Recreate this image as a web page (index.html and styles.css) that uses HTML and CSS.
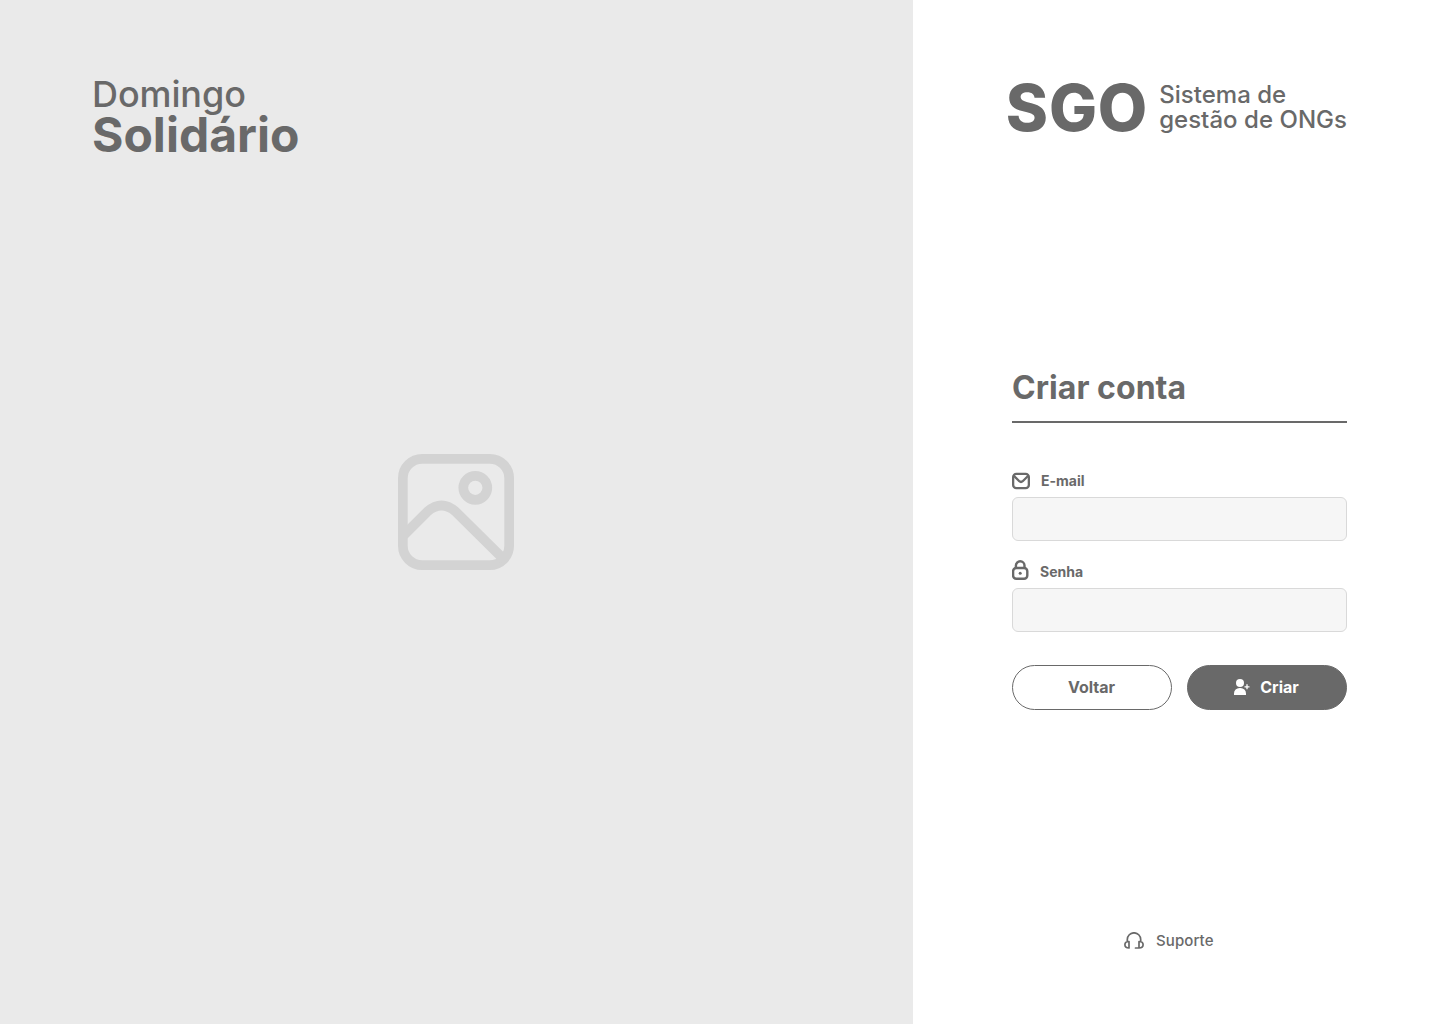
FILE: index.html
```html
<!DOCTYPE html>
<html lang="pt-BR">
<head>
<meta charset="utf-8">
<title>Domingo Solidário - Criar conta</title>
<link rel="stylesheet" href="styles.css">
</head>
<body>
<div class="page">
  <section class="cover">
    <h1 class="org"><span class="org-first">Domingo</span><span class="org-second">Solidário</span></h1>
    <div class="cover-picture">
      <svg width="116" height="116" viewBox="0 0 116 116" fill="none" stroke="#d3d3d3" stroke-width="9.7">
        <rect x="4.85" y="4.85" width="106.3" height="106.3" rx="19.3"/>
        <circle cx="77.3" cy="33.8" r="12"/>
        <path d="M6 81L29.5 57.5Q43.5 45.5 57.5 57.5L106 105.5"/>
      </svg>
    </div>
  </section>
  <main class="panel">
    <header class="brand">
      <span class="brand-short">SGO</span>
      <span class="brand-long">Sistema de<br>gestão de ONGs</span>
    </header>
    <form class="form">
      <h2 class="title">Criar conta</h2>
      <label class="label label-email" for="email">
        <svg width="18" height="18" viewBox="0 0 18 18" fill="none" stroke="#696969" stroke-width="2.3" stroke-linecap="round" stroke-linejoin="round"><rect x="1.15" y="1.9" width="15.7" height="14.2" rx="3.2"/><path d="M2 4L7.3 9.2Q9 10.7 10.7 9.2L16 4"/></svg>
        <span>E-mail</span>
      </label>
      <input class="input" id="email" type="email">
      <label class="label label-password" for="password">
        <svg width="17" height="20" viewBox="0 0 17 20" fill="none" stroke="#696969" stroke-width="2.4"><rect x="1.1" y="8" width="14.2" height="10.8" rx="3.2"/><path d="M3.9 8V5.6a4.3 4.3 0 0 1 8.6 0V8"/><circle cx="8.2" cy="13.2" r="1.5" fill="#696969" stroke="none"/></svg>
        <span>Senha</span>
      </label>
      <input class="input" id="password" type="password">
      <div class="actions">
        <button class="button" type="button">Voltar</button>
        <button class="button button-primary" type="submit">
          <svg width="16" height="16" viewBox="0 0 16 16" fill="#fff"><circle cx="6" cy="4" r="4"/><path d="M0 16v-1.5a5.5 5.5 0 0 1 5.5-5.5h1a5.5 5.5 0 0 1 5.5 5.5V16z"/><path d="M13 5.3v5M10.5 7.8h5" stroke="#fff" stroke-width="1.3"/></svg>
          <span>Criar</span>
        </button>
      </div>
    </form>
    <a class="support" href="#">
      <svg class="support-icon" width="20" height="18" viewBox="0 0 20 18" fill="none" stroke="#696969" stroke-width="1.7" stroke-linecap="round" stroke-linejoin="round"><path d="M3.3 9.5V7.5a6.7 6.7 0 0 1 13.4 0v2M5 9.5v6.5c-2.5 0-4.1-1-4.1-3.2S2.5 9.5 5 9.5zM15 9.5V16c2.5 0 4.1-1 4.1-3.2S17.5 9.5 15 9.5zM15 16h-3.5"/></svg>
      <span>Suporte</span>
    </a>
  </main>
</div>
</body>
</html>
```
FILE: styles.css
```css
* { box-sizing: border-box; }
body { margin: 0; font-family: Inter, sans-serif; color: #696969; }
svg { display: block; flex: none; }
.page { display: grid; grid-template-columns: 913px 1fr; height: 1024px; background: #fff; }
.cover { display: grid; background: #eaeaea; grid-template-rows: 454px 1fr; }
.org { margin: 0; padding: 72px 0 0 92px; display: flex; flex-direction: column; }
.org-first { font-size: 36px; line-height: 44px; font-weight: 500; letter-spacing: -0.1px; }
.org-second { font-size: 48px; line-height: 38px; font-weight: 700; }
.cover-picture { padding-left: 398px; }
.panel { display: flex; flex-direction: column; padding: 80px 93px 0 99px; }
.brand { display: flex; justify-content: flex-end; height: 56px; white-space: nowrap; gap: 11px; margin-left: -10px; }
.brand-short { font-size: 64px; line-height: 56px; font-weight: 800; letter-spacing: 0.8px; }
.brand-long { font-size: 24px; line-height: 25px; font-weight: 500; letter-spacing: 0.03px; padding-top: 2px; }
.form { margin-top: 231px; width: 335px; }
.title { margin: 0; height: 56px; border-bottom: 2px solid #696969; font-size: 32px; line-height: 41px; font-weight: 700; letter-spacing: 0.05px; }
.label { display: flex; align-items: center; height: 20px; gap: 11px; font-size: 14px; font-weight: 700; }
.label-email { margin-top: 48px; margin-bottom: 6px; }
.label-email span { margin-bottom: 2px; }
.label-password { margin-top: 19px; margin-bottom: 8px; }
.label-password span { margin-top: 2px; }
.input { display: block; width: 335px; height: 44px; border: 1px solid #d9d9d9; border-radius: 6px; background: #f6f6f6; }
.actions { display: flex; gap: 15px; margin-top: 33px; }
.button { display: flex; align-items: center; justify-content: center; gap: 10px; width: 160px; height: 45px; border: 1px solid #696969; border-radius: 23px; background: #fff; color: #696969; font: 700 16px Inter, sans-serif; padding: 0 1px 2px 0; }
.button-primary { background: #696969; color: #fff; }
.support { display: flex; align-items: center; gap: 12px; height: 20px; margin: 220px 0 0 112px; color: #696969; text-decoration: none; font-size: 15px; font-weight: 500; letter-spacing: 0.1px; }
.support-icon { margin-top: 1px; }
```
